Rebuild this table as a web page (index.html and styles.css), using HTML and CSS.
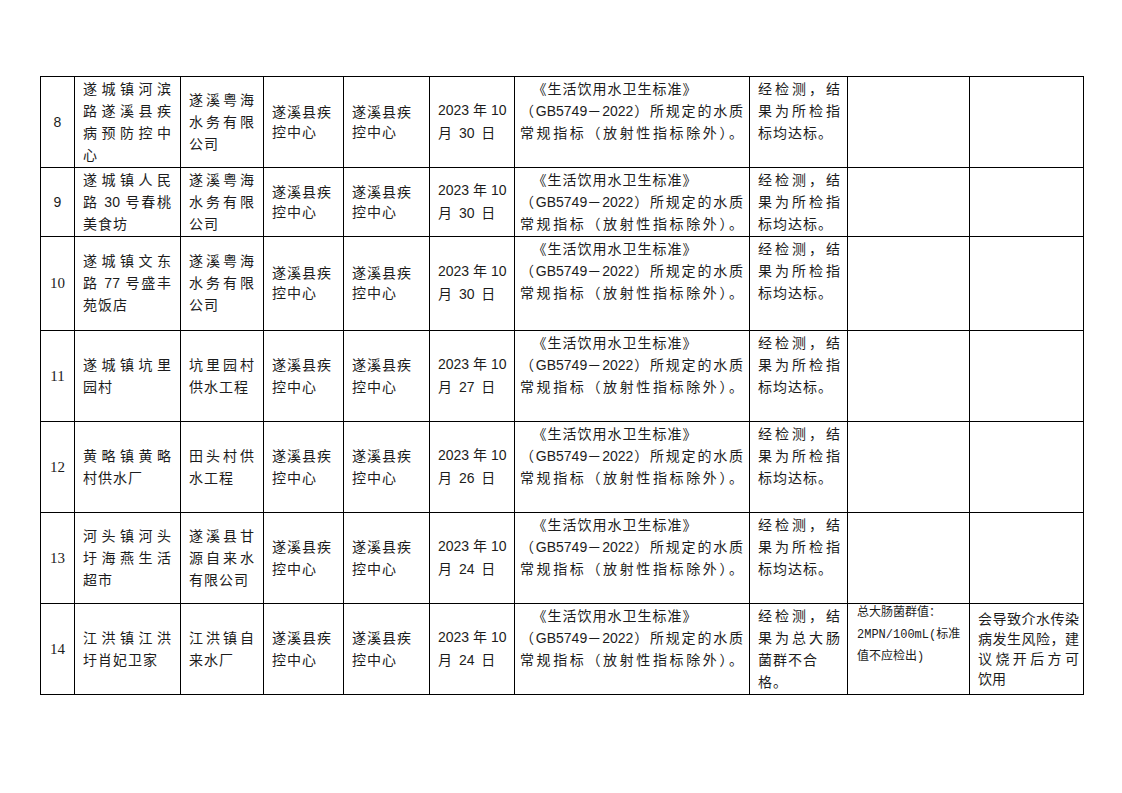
FILE: index.html
```html
<!DOCTYPE html>
<html lang="zh-CN">
<head>
<meta charset="utf-8">
<title>水质检测结果</title>
<link rel="stylesheet" href="styles.css">
</head>
<body>
<div class="page">
<table class="grid">
<colgroup>
<col class="w1"><col class="w2"><col class="w3"><col class="w4"><col class="w5">
<col class="w6"><col class="w7"><col class="w8"><col class="w9"><col class="w10">
</colgroup>
<tbody>
<tr class="h91">
<td class="no sans">8</td>
<td class="name"><span class="l f">遂城镇河滨</span><span class="l f">路遂溪县疾</span><span class="l f">病预防控中</span><span class="l">心</span></td>
<td class="name"><span class="l f">遂溪粤海</span><span class="l f">水务有限</span><span class="l">公司</span></td>
<td class="org tight"><span class="l">遂溪县疾</span><span class="l">控中心</span></td>
<td class="org tight"><span class="l">遂溪县疾</span><span class="l">控中心</span></td>
<td class="date"><span class="l">2023 年 10</span><span class="l sp">月 30 日</span></td>
<td class="std"><span class="l ttl">《生活饮用水卫生标准》</span><span class="l f">（<span class="n">GB5749</span>－<span class="n">2022</span>）所规定的水质</span><span class="l f">常规指标（放射性指标除外）。</span></td>
<td class="res"><span class="l f">经检测，结</span><span class="l f">果为所检指</span><span class="l">标均达标。</span></td>
<td class="val"></td>
<td class="note"></td>
</tr>
<tr class="h68">
<td class="no sans">9</td>
<td class="name"><span class="l f">遂城镇人民</span><span class="l f">路 <span class="n">30</span> 号春桃</span><span class="l">美食坊</span></td>
<td class="name"><span class="l f">遂溪粤海</span><span class="l f">水务有限</span><span class="l">公司</span></td>
<td class="org tight"><span class="l">遂溪县疾</span><span class="l">控中心</span></td>
<td class="org tight"><span class="l">遂溪县疾</span><span class="l">控中心</span></td>
<td class="date"><span class="l">2023 年 10</span><span class="l sp">月 30 日</span></td>
<td class="std"><span class="l ttl">《生活饮用水卫生标准》</span><span class="l f">（<span class="n">GB5749</span>－<span class="n">2022</span>）所规定的水质</span><span class="l f">常规指标（放射性指标除外）。</span></td>
<td class="res"><span class="l f">经检测，结</span><span class="l f">果为所检指</span><span class="l">标均达标。</span></td>
<td class="val"></td>
<td class="note"></td>
</tr>
<tr class="h94">
<td class="no serif">10</td>
<td class="name"><span class="l f">遂城镇文东</span><span class="l f">路 <span class="n">77</span> 号盛丰</span><span class="l">苑饭店</span></td>
<td class="name"><span class="l f">遂溪粤海</span><span class="l f">水务有限</span><span class="l">公司</span></td>
<td class="org tight"><span class="l">遂溪县疾</span><span class="l">控中心</span></td>
<td class="org tight"><span class="l">遂溪县疾</span><span class="l">控中心</span></td>
<td class="date"><span class="l">2023 年 10</span><span class="l sp">月 30 日</span></td>
<td class="std"><span class="l ttl">《生活饮用水卫生标准》</span><span class="l f">（<span class="n">GB5749</span>－<span class="n">2022</span>）所规定的水质</span><span class="l f">常规指标（放射性指标除外）。</span></td>
<td class="res"><span class="l f">经检测，结</span><span class="l f">果为所检指</span><span class="l">标均达标。</span></td>
<td class="val"></td>
<td class="note"></td>
</tr>
<tr class="h90">
<td class="no serif">11</td>
<td class="name"><span class="l f">遂城镇坑里</span><span class="l">园村</span></td>
<td class="name"><span class="l f">坑里园村</span><span class="l">供水工程</span></td>
<td class="org"><span class="l">遂溪县疾</span><span class="l">控中心</span></td>
<td class="org"><span class="l">遂溪县疾</span><span class="l">控中心</span></td>
<td class="date"><span class="l">2023 年 10</span><span class="l sp">月 27 日</span></td>
<td class="std"><span class="l ttl">《生活饮用水卫生标准》</span><span class="l f">（<span class="n">GB5749</span>－<span class="n">2022</span>）所规定的水质</span><span class="l f">常规指标（放射性指标除外）。</span></td>
<td class="res"><span class="l f">经检测，结</span><span class="l f">果为所检指</span><span class="l">标均达标。</span></td>
<td class="val"></td>
<td class="note"></td>
</tr>
<tr class="h91">
<td class="no serif">12</td>
<td class="name"><span class="l f">黄略镇黄略</span><span class="l">村供水厂</span></td>
<td class="name"><span class="l f">田头村供</span><span class="l">水工程</span></td>
<td class="org"><span class="l">遂溪县疾</span><span class="l">控中心</span></td>
<td class="org"><span class="l">遂溪县疾</span><span class="l">控中心</span></td>
<td class="date"><span class="l">2023 年 10</span><span class="l sp">月 26 日</span></td>
<td class="std"><span class="l ttl">《生活饮用水卫生标准》</span><span class="l f">（<span class="n">GB5749</span>－<span class="n">2022</span>）所规定的水质</span><span class="l f">常规指标（放射性指标除外）。</span></td>
<td class="res"><span class="l f">经检测，结</span><span class="l f">果为所检指</span><span class="l">标均达标。</span></td>
<td class="val"></td>
<td class="note"></td>
</tr>
<tr class="h91b">
<td class="no serif">13</td>
<td class="name"><span class="l f">河头镇河头</span><span class="l f">圩海燕生活</span><span class="l">超市</span></td>
<td class="name"><span class="l f">遂溪县甘</span><span class="l f">源自来水</span><span class="l">有限公司</span></td>
<td class="org"><span class="l">遂溪县疾</span><span class="l">控中心</span></td>
<td class="org"><span class="l">遂溪县疾</span><span class="l">控中心</span></td>
<td class="date"><span class="l">2023 年 10</span><span class="l sp">月 24 日</span></td>
<td class="std"><span class="l ttl">《生活饮用水卫生标准》</span><span class="l f">（<span class="n">GB5749</span>－<span class="n">2022</span>）所规定的水质</span><span class="l f">常规指标（放射性指标除外）。</span></td>
<td class="res"><span class="l f">经检测，结</span><span class="l f">果为所检指</span><span class="l">标均达标。</span></td>
<td class="val"></td>
<td class="note"></td>
</tr>
<tr class="h90">
<td class="no serif">14</td>
<td class="name"><span class="l f">江洪镇江洪</span><span class="l">圩肖妃卫家</span></td>
<td class="name"><span class="l f">江洪镇自</span><span class="l">来水厂</span></td>
<td class="org"><span class="l">遂溪县疾</span><span class="l">控中心</span></td>
<td class="org"><span class="l">遂溪县疾</span><span class="l">控中心</span></td>
<td class="date"><span class="l">2023 年 10</span><span class="l sp">月 24 日</span></td>
<td class="std"><span class="l ttl">《生活饮用水卫生标准》</span><span class="l f">（<span class="n">GB5749</span>－<span class="n">2022</span>）所规定的水质</span><span class="l f">常规指标（放射性指标除外）。</span></td>
<td class="res res4"><span class="l f">经检测，结</span><span class="l f">果为总大肠</span><span class="l">菌群不合</span><span class="l">格。</span></td>
<td class="val"><div class="valtext"><span class="l">总大肠菌群值：</span><span class="l"><span class="mono">2MPN/100mL(</span>标准</span><span class="l">值不应检出<span class="mono">)</span></span></div></td>
<td class="note"><span class="l f">会导致介水传染</span><span class="l f">病发生风险，建</span><span class="l f">议烧开后方可</span><span class="l">饮用</span></td>
</tr>
</tbody>
</table>
</div>
</body>
</html>
```

FILE: styles.css
```css
html, body {
  margin: 0;
  background: #fff;
}

body {
  font-family: "Liberation Sans", "Noto Sans CJK SC", sans-serif;
  font-size: 14px;
  color: #1c1c1c;
}

.page {
  padding: 76px 0 0 40px;
}

.grid {
  border-collapse: collapse;
  table-layout: fixed;
  width: 1043px;
}

.w1 { width: 34px; }
.w2 { width: 106px; }
.w3 { width: 83px; }
.w4 { width: 80px; }
.w5 { width: 86px; }
.w6 { width: 85px; }
.w7 { width: 235px; }
.w8 { width: 98px; }
.w9 { width: 122px; }
.w10 { width: 114px; }

.h91 { height: 91px; }
.h68 { height: 68.5px; }
.h94 { height: 94.5px; }
.h90 { height: 90.5px; }
.h91b { height: 91.5px; }

.grid td {
  border: 1px solid #000;
  padding: 0 8px;
  vertical-align: middle;
  line-height: 22px;
  letter-spacing: 1px;
}

.l {
  display: block;
  white-space: nowrap;
}

.f {
  text-align: justify;
  text-align-last: justify;
}

.n {
  letter-spacing: 0;
}

.grid .no {
  padding: 0;
  text-align: center;
  letter-spacing: 0;
}

.grid .sans { font-family: "Liberation Sans", sans-serif; }
.grid .serif { font-family: "Liberation Serif", serif; font-size: 15px; }

.grid .name {
  padding: 0 8px;
  line-height: 22px;
}

.grid .org {
  padding: 0 6px 0 8px;
  line-height: 22px;
}

.grid .tight {
  line-height: 20px;
}

.grid .std {
  vertical-align: top;
  padding: 1px 5px 0 5px;
  line-height: 22px;
}

.ttl {
  text-align: center;
  padding-right: 34px;
}

.grid .date {
  padding: 0 4px 0 8px;
  line-height: 23px;
  letter-spacing: 0;
}

.sp {
  word-spacing: 3px;
}

.grid .res {
  vertical-align: top;
  padding: 1px 6px 0 8px;
  line-height: 22px;
}

.grid .res4 {
  line-height: 22px;
  padding-top: 1px;
}

.grid .val {
  vertical-align: top;
  padding: 0 4px 0 9px;
  font-size: 12px;
  line-height: 21.5px;
  letter-spacing: 0;
}

.valtext {
  margin-top: -2px;
}

.mono {
  font-family: "Liberation Mono", monospace;
}

.grid .note {
  padding: 0 4px 0 8px;
  line-height: 20px;
  letter-spacing: 0;
}
```
